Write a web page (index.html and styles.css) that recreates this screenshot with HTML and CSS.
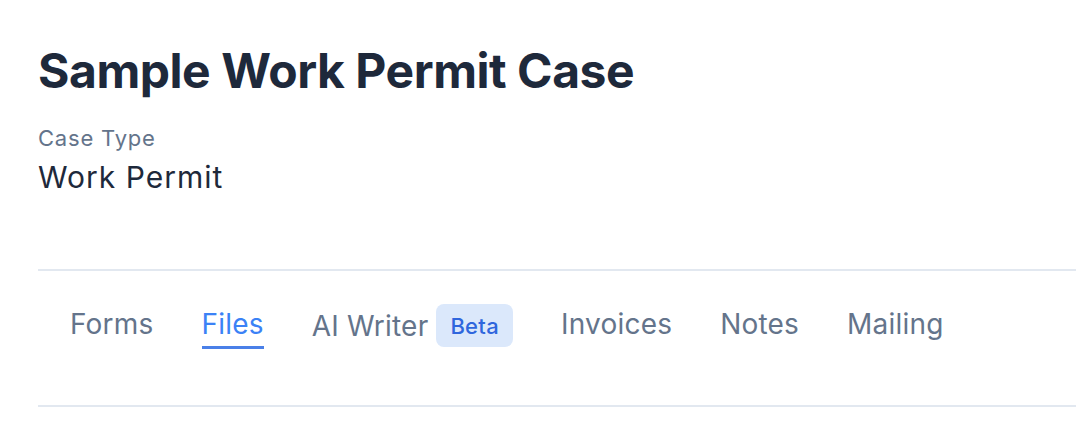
FILE: index.html
```html
<!DOCTYPE html>
<html lang="en">
<head>
<meta charset="utf-8">
<title>Sample Work Permit Case</title>
<link rel="stylesheet" href="styles.css">
</head>
<body>
<div class="page">
  <header class="case-header">
    <h1 class="case-title">Sample Work Permit Case</h1>
    <div class="case-meta">
      <div class="meta-label">Case Type</div>
      <div class="meta-value">Work Permit</div>
    </div>
  </header>
  <nav class="tabs">
    <a class="tab">Forms</a>
    <a class="tab tab-active">Files</a>
    <a class="tab">AI Writer <span class="badge">Beta</span></a>
    <a class="tab">Invoices</a>
    <a class="tab">Notes</a>
    <a class="tab">Mailing</a>
  </nav>
</div>
</body>
</html>
```
FILE: styles.css
```css
* { box-sizing: border-box; }
html, body { margin: 0; padding: 0; background: #ffffff; }
body {
  font-family: Inter, "Noto Sans", "Liberation Sans", sans-serif;
  color: #1e293b;
}
.page {
  padding: 43px 0 0 38px;
}
.case-title {
  margin: 0;
  font-size: 48px;
  line-height: 56px;
  font-weight: 700;
  letter-spacing: -0.45px;
  color: #1e293b;
}
.case-meta {
  margin-top: 25px;
  display: flex;
  flex-direction: column;
  gap: 7px;
}
.meta-label {
  font-size: 22px;
  line-height: 28px;
  letter-spacing: 0.8px;
  color: #64748b;
}
.meta-value {
  font-size: 30px;
  line-height: 36px;
  letter-spacing: 1px;
  color: #1e293b;
}
.tabs {
  margin-top: 74px;
  border-top: 2px solid #e2e8f0;
  border-bottom: 2px solid #e2e8f0;
  padding: 33px 32px 53px;
  display: flex;
  align-items: flex-start;
  gap: 48px;
}
.tab {
  display: flex;
  align-items: center;
  gap: 8px;
  font-size: 28px;
  line-height: 40px;
  letter-spacing: 0.2px;
  color: #64748b;
  padding-bottom: 2px;
  border-bottom: 3px solid transparent;
  text-decoration: none;
}
.tab-active {
  color: #3b82f6;
  border-bottom-color: #4a80e8;
}
.badge {
  display: inline-flex;
  align-items: center;
  height: 43px;
  padding: 0 14px;
  border-radius: 8px;
  background: #dbe8fb;
  color: #2f66dd;
  font-size: 22px;
  line-height: 28px;
  letter-spacing: 0.3px;
  font-weight: 500;
}
```
